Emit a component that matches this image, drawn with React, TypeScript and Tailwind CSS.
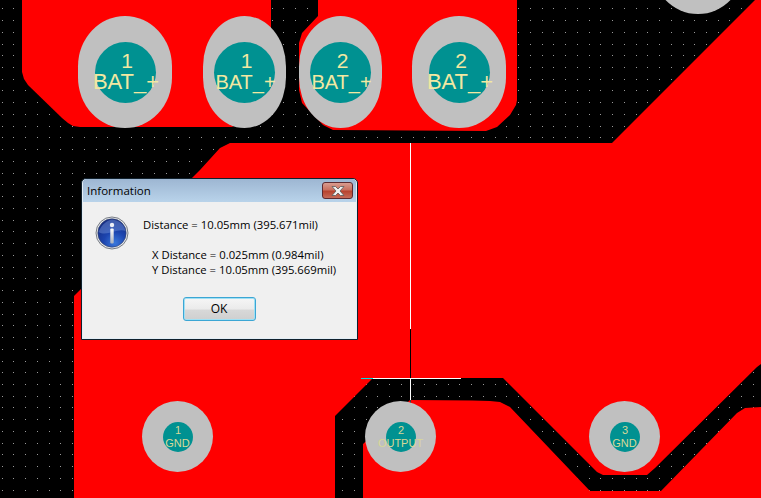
import React from "react"

// dots of the board grid, about 11.74px apart
const gridDots = () => {
    let d = ""
    for (let row = 0; row < 43; row++) {
        for (let col = 0; col < 66; col++) {
            const x = Math.round(1.6 + col * 11.74)
            const y = Math.round(8.3 + row * 11.74)
            d += `M${x} ${y}h1v1h-1z`
        }
    }
    return d
}

const CopperLayer = () => (
    <svg className="absolute inset-0" width="761" height="498" viewBox="0 0 761 498">
        <path d={gridDots()} fill="#9a9a9a" shapeRendering="crispEdges" />
        <g fill="#ff0000">
            <path d="M22 0V72L24 79L28 85L62 118L68 123L73 126L80 127H232L245 120L271 60V0Z" />
            <path d="M318 0V16L302 33L299 43V90L302 103L323 125L333 130L486 131L497 127L510 115L516 105L517 100V0Z" />
            <path d="M74 498V296L82 288L200 170L220 148L230 143H612L755 0H761V364L757 367L655 468L647 475H603L597 472L503 378H373L335 416V498Z" />
            <path d="M363 498V444L410 400L472 400.500L490 401L500 402L510 407L590 491H661L737 413L745 408L761 407V498Z" />
        </g>
        <g shapeRendering="crispEdges">
            <rect x="410" y="143" width="1" height="186" fill="#ffffff" />
            <rect x="410" y="329" width="1" height="49" fill="#000000" />
            <rect x="410" y="378" width="1" height="22" fill="#ffffff" />
            <rect x="410" y="400" width="1" height="26" fill="#404040" />
            <rect x="410" y="426" width="1" height="3" fill="#ff4040" />
            <rect x="372" y="378" width="89" height="1" fill="#ffffff" />
            <rect x="361" y="378" width="12" height="1" fill="#00e0e0" />
        </g>
    </svg>
)

interface PadProps {
    className: string
    number: string
    label: string
    labelClass?: string
}

const BigPad = ({ className, number, label, labelClass = "text-[22px]" }: PadProps) => (
    <div className={`absolute flex items-center justify-center rounded-[50%/45%] bg-[#c0c0c0] ${className}`}>
        <div className="flex h-[61px] w-[61px] flex-col items-center rounded-full bg-[#009191] pt-[9px] text-[#f2e8a2]">
            <span className="pl-[4px] text-[21px] leading-[20px]">{number}</span>
            <span className={`whitespace-nowrap pl-[2px] leading-[22px] ${labelClass}`}>{label}</span>
        </div>
    </div>
)

const SmallPad = ({ className, number, label }: PadProps) => (
    <div className={`absolute flex h-[71px] w-[71px] items-center justify-center rounded-full bg-[#c0c0c0] ${className}`}>
        <div className="flex h-[30px] w-[30px] flex-col items-center rounded-full bg-[#009191] pt-[2px] text-[#d8d898]">
            <span className="pl-px text-[11px] leading-[13px]">{number}</span>
            <span className="whitespace-nowrap text-[11px] leading-[13px]">{label}</span>
        </div>
    </div>
)

const InfoIcon = () => (
    <svg width="34" height="34" viewBox="0 0 34 34">
        <defs>
            <radialGradient id="infoBlue" cx="0.6" cy="0.85" r="0.8">
                <stop offset="0" stopColor="#3a78dc" />
                <stop offset="0.5" stopColor="#1c44ae" />
                <stop offset="1" stopColor="#172f86" />
            </radialGradient>
            <linearGradient id="infoBar" x1="0" y1="0" x2="0" y2="1">
                <stop offset="0" stopColor="#ffffff" />
                <stop offset="1" stopColor="#aab0bc" />
            </linearGradient>
        </defs>
        <circle cx="17" cy="17" r="16" fill="#e6e8ea" stroke="#777c84" strokeWidth="1" />
        <circle cx="17" cy="17" r="14.200" fill="url(#infoBlue)" stroke="#39456a" strokeWidth="0.6" />
        <path d="M3.500 16C7 8 12 4.500 17 3.500C24 4 29.500 9 30.500 15C22 12 12 21 3.500 16Z" fill="#7f9fe0" opacity="0.4" />
        <circle cx="17" cy="9" r="2.200" fill="#eef0f6" />
        <rect x="15.300" y="12.500" width="3.400" height="15" rx="1" fill="url(#infoBar)" />
    </svg>
)

const CloseButton = () => (
    <div className="flex h-[17px] w-[31px] items-center justify-center rounded-[3px] border border-[#5e2a30] bg-[linear-gradient(to_bottom,#d99c90_0%,#c9705f_45%,#b8432f_55%,#c66a58_100%)]">
        <svg width="14" height="10" viewBox="0 0 14 10">
            <path d="M1 0.500H4.500L7 3L9.500 0.500H13L9 5L13 9.500H9.500L7 7L4.500 9.500H1L5 5Z" fill="#f2f2f2" stroke="#5a5a5a" strokeWidth="0.8" />
        </svg>
    </div>
)

const InfoDialog = () => (
    <div className="absolute left-[81px] top-[178px] flex h-[162px] w-[277px] flex-col rounded-t-[5px] border border-[#10202c] bg-[#a9c4df] px-px pb-px font-['Open_Sans',sans-serif] text-[#000000] shadow-[inset_0_0_0_1px_#e4eef6]">
        <div className="flex h-[23px] shrink-0 items-center justify-between rounded-t-[4px] bg-[linear-gradient(to_bottom,#9db6d2,#b9d3ea)] pl-[4px] pr-[3px]">
            <span className="text-[11.500px]">Information</span>
            <CloseButton />
        </div>
        <div className="flex flex-1 flex-col bg-[#f0f0f0]">
            <div className="flex pl-[12px] pt-[14px]">
                <InfoIcon />
                <div className="pl-[14px] text-[11.300px] leading-[15px]">
                    <p className="mt-px">Distance = 10.05mm (395.671mil)</p>
                    <p className="mt-[15px] pl-[9px]">X Distance = 0.025mm (0.984mil)</p>
                    <p className="pl-[9px]">Y Distance = 10.05mm (395.669mil)</p>
                </div>
            </div>
            <div className="flex justify-center pt-[20px]">
                <button className="h-[24px] w-[73px] rounded-[3px] border border-[#3ca6d4] bg-[linear-gradient(to_bottom,#f6f6f6_0%,#ebebeb_50%,#d8d8d8_55%,#cfcfcf_100%)] pr-px text-[12px] leading-none shadow-[inset_0_0_0_1px_#9fe0f4]">
                    OK
                </button>
            </div>
        </div>
    </div>
)

export default function App() {
    return (
        <div className="relative h-[498px] w-[761px] overflow-hidden bg-black font-['Liberation_Sans',sans-serif]">
            <CopperLayer />
            <BigPad className="left-[78px] top-[16px] h-[112px] w-[94px]" number="1" label="BAT_+" />
            <BigPad className="left-[203px] top-[16px] h-[112px] w-[83px]" number="1" label="BAT_+" labelClass="text-[20px]" />
            <BigPad className="left-[299px] top-[16px] h-[112px] w-[83px]" number="2" label="BAT_+" labelClass="text-[20px]" />
            <BigPad className="left-[412px] top-[16px] h-[112px] w-[94px]" number="2" label="BAT_+" />
            <div className="absolute left-[651px] top-[-98px] h-[112px] w-[94px] rounded-[50%/45%] bg-[#c0c0c0]" />
            <SmallPad className="left-[142px] top-[401px]" number="1" label="GND" />
            <SmallPad className="left-[365px] top-[401px]" number="2" label="OUTPUT" />
            <SmallPad className="left-[589px] top-[401px]" number="3" label="GND" />
            <InfoDialog />
        </div>
    )
}
